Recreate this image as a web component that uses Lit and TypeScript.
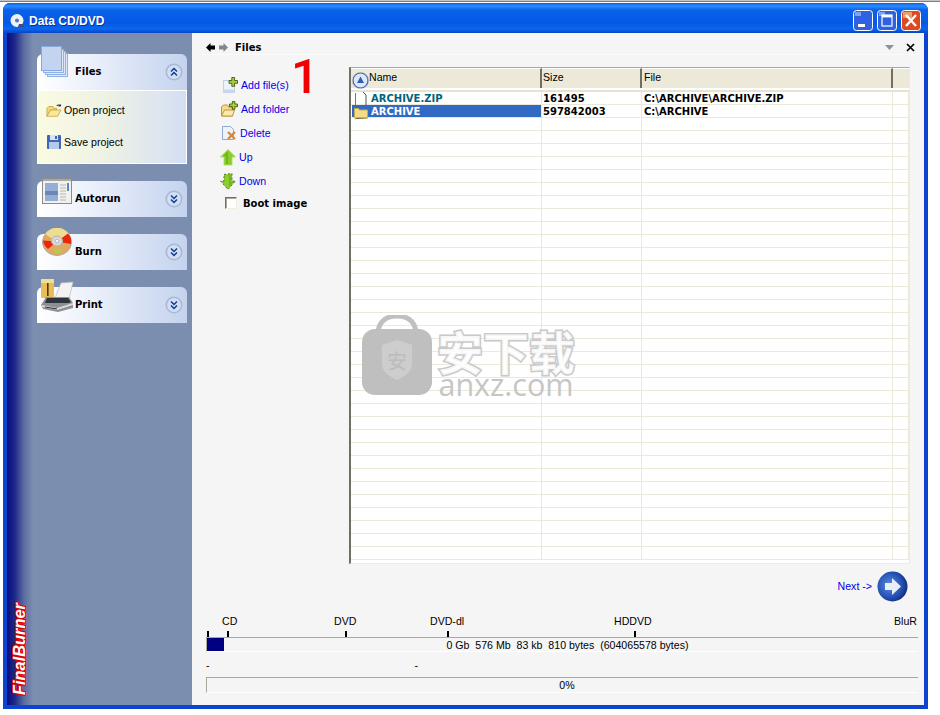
import { LitElement, html, svg, css } from 'lit';
import { customElement } from 'lit/decorators.js';

const chevrons = (up: boolean) => svg`
  <svg class="chev" width="18" height="18" viewBox="0 0 18 18">
    <circle cx="9" cy="9" r="7.7" fill="#d3def3" stroke="#a9b8d6" stroke-width="1.6"/>
    <path d=${up ? 'M6 8.5l3-3 3 3M6 12.5l3-3 3 3' : 'M6 5.5l3 3 3-3M6 9.5l3 3 3-3'} fill="none" stroke="#0b3f94" stroke-width="1.5"/>
  </svg>`;

const stackIcon = svg`
  <svg class="art" style="left:4px;top:-8px" width="28" height="32" viewBox="0 0 28 32">
    <g fill="#dfe8f8" stroke="#8fb2e6">
      <rect x="6.5" y="7.5" width="20" height="23"/>
      <rect x="4.5" y="5.5" width="20" height="23"/>
      <rect x="2.5" y="3.5" width="20" height="23"/>
    </g>
    <rect x=".5" y=".5" width="20" height="24" fill="#c3d4f1" stroke="#86a9e0"/>
  </svg>`;

const windowIcon = svg`
  <svg class="art" style="left:5px;top:-3px" width="31" height="27" viewBox="0 0 31 27">
    <rect x=".5" y=".5" width="29" height="25" fill="#f1f1ee" stroke="#8c8c8c"/>
    <rect x="1" y="1" width="28" height="2" fill="#a9a9a9"/>
    <rect x="3" y="5" width="13" height="18" fill="#93afd8"/>
    <rect x="3" y="13" width="13" height="4" fill="#6b88b4"/>
    <path d="M18 7h6M18 10h6M18 13h6M18 16h6M18 19h6M18 22h6" stroke="#b4b4b4"/>
    <rect x="25" y="5" width="2" height="8" fill="#5f86c5"/>
  </svg>`;

const discIcon = svg`
  <svg class="art" style="left:5px;top:-6px" width="30" height="28" viewBox="0 0 30 28">
    <ellipse cx="15" cy="14" rx="14.500" ry="13.500" fill="#e2a860" stroke="#a8a8a8"/>
    <path d="M3 6a14 13 0 0 1 24 0l-12 8z" fill="#efdc8e"/>
    <path d="M1 12.500l14 1-9 7.500a14 13 0 0 1-5-8.500z" fill="#e8280c"/>
    <path d="M29 11l-14 2.500 11-8a14 13 0 0 1 3 5.500z" fill="#e8280c"/>
    <path d="M29 10v6l-14-2.500z" fill="#e8280c"/>
    <ellipse cx="16" cy="23" rx="4" ry="2.200" fill="#b9c94a"/>
    <ellipse cx="15" cy="13" rx="5.500" ry="5" fill="#d8d8d8" stroke="#b4b4b4"/>
    <circle cx="15" cy="13" r="1.800" fill="#f4f4f4" stroke="#a0a0a0" stroke-width=".6"/>
  </svg>`;

const printerIcon = svg`
  <svg class="art" style="left:4px;top:-8px" width="33" height="33" viewBox="0 0 33 33">
    <rect x="0" y="0" width="13" height="19" rx="1" fill="#e8bc58"/>
    <rect x="0" y="0" width="13" height="4" fill="#f6dd8e"/>
    <path d="M6 4h1.600v13H6z" fill="#4b3a14"/>
    <path d="M14 19l6-15 12-1-4 17z" fill="#f3f3f3" stroke="#bcbcbc" stroke-width=".7"/>
    <path d="M0 26l5-8h23l4 6v5L17 33 2 30z" fill="#8d8f94"/>
    <path d="M6 19h21l3 4-2 1H4z" fill="#2f333c"/>
    <path d="M1 26l15 3 16-5v2L16 31 1 28z" fill="#d9dadd"/>
    <path d="M4 28l12 2" stroke="#1f2430" stroke-width="1"/>
  </svg>`;

const openIcon = svg`
  <svg width="16" height="15" viewBox="0 0 18 17">
    <path d="M12 3a4 3 0 0 1 5 0" fill="none" stroke="#222" stroke-width="1.200"/>
    <path d="M16.500 1v3h-2.600z" fill="#222"/>
    <path d="M1 15V6l2-2h5l1 2h3v2H5z" fill="#f4d87a" stroke="#c9a84a"/>
    <path d="M1 15l4-7h12l-4 7z" fill="#fbe89a" stroke="#c9a84a"/>
  </svg>`;

const floppyIcon = svg`
  <svg width="16" height="16" viewBox="0 0 16 16">
    <rect x="1" y="1" width="14" height="14" rx="1" fill="#3f67b6"/>
    <rect x="4" y="1" width="8" height="5" fill="#dbe3f2"/>
    <rect x="9" y="2" width="2" height="3" fill="#3f67b6"/>
    <rect x="3" y="8" width="10" height="7" fill="#b5c9ea"/>
  </svg>`;

const addFileIcon = svg`
  <svg width="16" height="16" viewBox="0 0 16 16">
    <path d="M1.500 3.500h11v12h-11z" fill="#eef3fb" stroke="#c0d0e6"/>
    <path d="M1.500 12.500h11v3h-11z" fill="#c8d8ee"/>
    <path d="M7 3.500h2.800V.5h2.800v3h2.900v2.800h-2.900v3H9.800v-3H7z" fill="#a8d030" stroke="#2f4a10" stroke-width=".8"/>
  </svg>`;

const addFolderIcon = svg`
  <svg width="17" height="16" viewBox="0 0 17 16">
    <path d="M.5 15V6l2-2h4l1 2h4v9z" fill="#f6dc86" stroke="#b8994a"/>
    <path d="M.5 15l3-6h10l-2 6z" fill="#fbe9a8" stroke="#b8994a"/>
    <path d="M8.500 3h2.800V.5h2.600V3h2.600v2.700h-2.600v2.600h-2.600V5.700H8.500z" fill="#a8d030" stroke="#2f4a10" stroke-width=".8"/>
  </svg>`;

const deleteIcon = svg`
  <svg width="16" height="16" viewBox="0 0 16 16">
    <path d="M1.500 1.500h8l3 3v10h-11z" fill="#eef3fb" stroke="#8fa8cc"/>
    <path d="M7 7l7 7M14 7l-7 7" stroke="#d88a3a" stroke-width="2.400"/>
  </svg>`;

const upIcon = svg`
  <svg width="16" height="17" viewBox="0 0 16 17">
    <path d="M8 .5L15.500 8H12v8H4V8H.5z" fill="#8ccc2c" stroke="#a8dc50" stroke-width=".8"/>
    <path d="M8 2L3 7h3v8h2z" fill="#6cb81e"/>
  </svg>`;

const downIcon = svg`
  <svg width="16" height="17" viewBox="0 0 16 17">
    <path d="M4 1.500l8-1V8h3.500L8 16.500.5 8H4z" fill="#8ccc2c" stroke="#39531a" stroke-width=".8" stroke-dasharray="2 2"/>
    <path d="M9 2h2v7h2l-4 5z" fill="#6cb81e"/>
  </svg>`;

const fileIcon = svg`
  <svg width="14" height="13" viewBox="0 0 14 13">
    <path d="M1.500 1v12" stroke="#777"/>
    <path d="M9 0l3 3v10" fill="none" stroke="#555"/>
  </svg>`;

const folderIcon = svg`
  <svg class="over" width="14" height="14" viewBox="0 0 14 14">
    <path d="M.5 12V2.500h4l1 1.500h8v8z" fill="#f6dc86" stroke="#c8a94e"/>
    <path d="M1 13l2-1h10" stroke="#a8a04a"/>
  </svg>`;

const sortIcon = svg`
  <svg class="sort" width="17" height="17" viewBox="0 0 17 17">
    <circle cx="8.500" cy="8.500" r="7.500" fill="#dfe7f7" stroke="#2f5fb4" stroke-width="1.200"/>
    <circle cx="8.500" cy="8.500" r="8.200" fill="none" stroke="#b9b9b9" stroke-width=".6"/>
    <path d="M8.500 4.500l3.500 6.500H5z" fill="#2f5fb4"/>
  </svg>`;

const rows = [
  { name: 'ARCHIVE.ZIP', size: '161495', file: 'C:\\ARCHIVE\\ARCHIVE.ZIP', folder: false },
  { name: 'ARCHIVE', size: '597842003', file: 'C:\\ARCHIVE', folder: true },
];

// capacity marks, x relative to the bar
const ticks = [1, 21, 139, 241, 428];
const labels = [
  { text: 'CD', x: 16 },
  { text: 'DVD', x: 128 },
  { text: 'DVD-dl', x: 224 },
  { text: 'HDDVD', x: 408 },
  { text: 'BluR', x: 688 },
];

@customElement('app-root')
export class AppRoot extends LitElement {
  static styles = css`
    :host {
      display: block;
      height: 715px;
      background: #fff;
      font-family: 'Liberation Sans', Arial, sans-serif;
      font-size: 10.6px;
      color: #000;
      overflow: hidden;
    }
    .topline {
      height: 2px;
      background: linear-gradient(#c4c4c4 0 1px, #7f7f7f 1px);
    }
    .window {
      display: flex;
      flex-direction: column;
      width: 925px;
      height: 706px;
      margin: 1px 0 0 3px;
      border-radius: 7px 7px 0 0;
      background: #0a44cf;
      overflow: hidden;
    }
    .titlebar {
      display: flex;
      align-items: center;
      flex: none;
      height: 30px;
      padding: 5px 7px 0 7px;
      box-sizing: border-box;
      background: linear-gradient(#0a5fe8 0, #2f8bfb 3px, #0a62ea 7px, #0459e4 20px, #0a66ee 26px, #0745c8 30px);
      color: #fff;
      font-size: 12px;
      font-weight: bold;
      text-shadow: 1px 1px 0 #0a2f9a;
    }
    .titlebar .app-icon { margin-right: 4px; }
    .caption-btns { display: flex; gap: 4px; margin-left: auto; }
    .cap {
      display: block;
      width: 20px;
      height: 21px;
      box-sizing: border-box;
    }
    .client {
      display: flex;
      flex: 1;
      min-height: 0;
      margin: 0 4px 4px 4px;
    }
    .sidebar {
      display: flex;
      flex-direction: column;
      flex: none;
      width: 185px;
      padding-top: 21px;
      background: linear-gradient(90deg, #0a0a80 0, #1f2a8c 8px, #5c6d9f 17px, #7b8eb0 26px, #7b8eb0 100%);
    }
    .panel { width: 150px; margin: 0 0 17px 30px; }
    .panel-head {
      position: relative;
      display: flex;
      align-items: center;
      justify-content: space-between;
      height: 36px;
      padding: 0 4px 1px 38px;
      border-radius: 6px 6px 0 0;
      background: linear-gradient(90deg, #fff 0, #e6ecf9 45%, #c4d3ee 100%);
      font-family: 'DejaVu Sans', Verdana, sans-serif;
      font-size: 10px;
      font-weight: bold;
      box-sizing: border-box;
    }
    .art { position: absolute; }
    .chev { display: block; margin-top: 1px; }
    .panel-body {
      display: flex;
      flex-direction: column;
      gap: 12px;
      box-sizing: border-box;
      height: 74px;
      padding: 9px 0 0 8px;
      border: 1px solid #fff;
      background: linear-gradient(90deg, #fbfbe2 0, #eef2e4 45%, #d5dff4 100%);
    }
    .task { display: flex; align-items: center; gap: 2px; height: 20px; }
    .brand {
      align-self: flex-start;
      margin: auto 0 10px 4px;
      writing-mode: vertical-rl;
      transform: rotate(180deg);
      color: #fff;
      font-size: 16.4px;
      font-weight: bold;
      font-style: italic;
      line-height: 17px;
      text-shadow: 1px 0 #e00000, -1px 0 #e00000, 0 1px #e00000, 0 -1px #e00000, 1px 1px #e00000, -1px -1px #e00000, 1px -1px #e00000, -1px 1px #e00000;
    }
    .main {
      display: flex;
      flex-direction: column;
      flex: 1;
      min-width: 0;
      background: #f5f5f5;
    }
    .crumb {
      display: flex;
      align-items: center;
      gap: 4px;
      flex: none;
      height: 22px;
      margin: 0 7px 0 6px;
      padding: 7px 2px 0 8px;
      box-sizing: border-box;
      border-bottom: 1px solid #fbfbfb;
      font-family: 'DejaVu Sans', Verdana, sans-serif;
      font-size: 10px;
      font-weight: bold;
    }
    .crumb .title { margin-left: 3px; }
    .crumb .drop { margin-left: auto; margin-right: 8px; }
    .work { display: flex; flex: none; position: relative; }
    .actions {
      flex: none;
      width: 157px;
      padding: 18px 0 0 28px;
      box-sizing: border-box;
    }
    .action {
      display: flex;
      align-items: center;
      height: 24px;
      color: #0000e8;
    }
    .action .ic { display: flex; justify-content: center; width: 18px; margin-right: 3px; }
    .action .ic.file { justify-content: flex-end; }
    .action .ic.del { margin-right: 2px; }
    .action .ic.move { justify-content: flex-start; margin-right: 1px; }
    .check {
      display: flex;
      align-items: center;
      height: 20px;
      padding-left: 5px;
      font-family: 'DejaVu Sans', Verdana, sans-serif;
      font-size: 10px;
      font-weight: bold;
    }
    .box {
      width: 12px;
      height: 12px;
      margin-right: 6px;
      box-sizing: border-box;
      border: 1px solid;
      border-color: #716f64 #f1efe2 #f1efe2 #716f64;
      background: #fff;
      box-shadow: inset 1px 1px 0 #aca899;
    }
    .annot {
      position: absolute;
      left: 99px;
      top: -3px;
      color: #f00000;
      font-family: Roboto, sans-serif;
      font-size: 49px;
      font-weight: 500;
      line-height: 49px;
    }
    .table {
      position: relative;
      flex: none;
      width: 561px;
      height: 497px;
      margin-top: 12px;
      box-sizing: border-box;
      border-left: 2px solid #716f64;
      border-top: 1px solid #aca899;
      border-right: 1px solid #eeecdf;
      border-bottom: 1px solid #eeecdf;
      background: #fff;
      overflow: hidden;
    }
    .row {
      display: grid;
      grid-template-columns: 191px 100px 251px 1fr;
    }
    .head {
      height: 20px;
      background: #ece9d8;
      border-bottom: 2px solid #fff;
      box-shadow: 0 2px 0 #e6e3d2;
      margin-bottom: 2px;
    }
    .head > div {
      display: flex;
      align-items: center;
      padding: 0 0 3px 2px;
      box-sizing: border-box;
      border-top: 1px solid #fff;
      border-right: 2px solid #716f64;
    }
    .head > div:first-child { padding-left: 18px; position: relative; }
    .head > div:nth-child(2) { padding-left: 1px; }
    .head > div:last-child { border-right: 0; }
    .sort { position: absolute; left: 1px; top: 3px; }
    .cell-row { height: 13px; box-sizing: border-box; border-bottom: 1px solid #ece9d8; }
    .cell-row > div {
      display: flex;
      align-items: center;
      box-sizing: border-box;
      padding-left: 2px;
      border-right: 1px solid #ece9d8;
      font-family: 'DejaVu Sans', Verdana, sans-serif;
      font-size: 10px;
      font-weight: bold;
      white-space: nowrap;
    }
    .cell-row > div:nth-child(2) { padding-left: 1px; }
    .name { position: relative; color: #006478; padding-left: 20px !important; }
    .name svg { position: absolute; left: 3px; top: 0; }
    .name svg.over { top: 1px; }
    .name.sel { background: #316ac5; color: #fff; margin-left: 1px; padding-left: 19px !important; }
    .name.sel svg { left: 2px; }
    .watermark {
      position: absolute;
      left: 11px;
      top: 247px;
      display: flex;
      gap: 5px;
      pointer-events: none;
    }
    .wm-text { display: flex; flex-direction: column; align-items: center; margin-top: 12px; }
    .wm-cn {
      font-family: 'Noto Sans CJK SC', sans-serif;
      font-size: 46px;
      font-weight: 700;
      line-height: 46px;
      color: rgba(255, 255, 255, 0.85);
      -webkit-text-stroke: 3px #c9c9c9;
      paint-order: stroke fill;
    }
    .wm-en {
      font-family: 'Open Sans', sans-serif;
      font-size: 30.5px;
      line-height: 22px;
      color: #c6c6c6;
    }
    .next {
      display: flex;
      align-items: center;
      justify-content: flex-end;
      gap: 5px;
      flex: none;
      height: 38px;
      padding: 6px 16px 0 0;
      box-sizing: border-box;
      color: #0000e8;
    }
    .gauge { flex: none; margin: 13px 6px 0 14px; }
    .scale { position: relative; height: 22px; }
    .scale span { position: absolute; top: 0; line-height: 13px; }
    .scale i { position: absolute; bottom: 0; width: 2px; height: 6px; background: #000; }
    .bar {
      position: relative;
      display: flex;
      align-items: center;
      justify-content: center;
      height: 15px;
      box-sizing: border-box;
      padding-left: 10px;
      border-top: 1px solid #aca899;
      border-left: 1px solid #aca899;
      border-bottom: 1px solid #fff;
      white-space: pre;
    }
    .fill { position: absolute; left: 0; top: 0; bottom: 0; background: #000080; }
    .dashes { display: flex; height: 25px; align-items: center; gap: 205px; }
    .bar.progress { height: 16px; padding-bottom: 1px; padding-left: 9px; }
  `;

  render() {
    return html`
      <div class="topline"></div>
      <div class="window">
        <div class="titlebar">
          <svg class="app-icon" width="15" height="15" viewBox="0 0 15 15">
            <circle cx="7" cy="7.500" r="6.500" fill="#eef2f8"/>
            <circle cx="7" cy="7.500" r="2" fill="#5a78b8"/>
            <path d="M9 11h5v3H8z" fill="#3a4f88"/>
          </svg>
          Data CD/DVD
          <div class="caption-btns">
            <svg class="cap" viewBox="0 0 20 21">
              <rect x=".5" y=".5" width="19" height="20" rx="3" fill="#2f62e0" stroke="#fff"/>
              <rect x="2" y="2" width="6" height="4" fill="#7da3f2"/>
              <rect x="5" y="14" width="7" height="3" fill="#fff"/>
            </svg>
            <svg class="cap" viewBox="0 0 20 21">
              <rect x=".5" y=".5" width="19" height="20" rx="3" fill="#2f62e0" stroke="#fff"/>
              <rect x="2" y="2" width="6" height="4" fill="#7da3f2"/>
              <rect x="5" y="5" width="10" height="11" fill="none" stroke="#fff" stroke-width="1.200"/>
              <rect x="5" y="5" width="10" height="2.400" fill="#fff"/>
            </svg>
            <svg class="cap" viewBox="0 0 20 21">
              <rect x=".5" y=".5" width="19" height="20" rx="3" fill="#dc4a24" stroke="#fff"/>
              <rect x="2" y="2" width="9" height="6" fill="#e6a06a"/>
              <path d="M5 5l10 11M15 5L5 16" stroke="#fff" stroke-width="2.400"/>
            </svg>
          </div>
        </div>
        <div class="client">
          <div class="sidebar">
            <div class="panel">
              <div class="panel-head">${stackIcon}Files${chevrons(true)}</div>
              <div class="panel-body">
                <div class="task">${openIcon}Open project</div>
                <div class="task">${floppyIcon}Save project</div>
              </div>
            </div>
            <div class="panel"><div class="panel-head">${windowIcon}Autorun${chevrons(false)}</div></div>
            <div class="panel"><div class="panel-head">${discIcon}Burn${chevrons(false)}</div></div>
            <div class="panel"><div class="panel-head">${printerIcon}Print${chevrons(false)}</div></div>
            <div class="brand">FinalBurner</div>
          </div>
          <div class="main">
            <div class="crumb">
              <svg width="9" height="9" viewBox="0 0 9 9"><path d="M0 4.500L4.500 0v2.500H9v4H4.500V9z"/></svg>
              <svg width="9" height="9" viewBox="0 0 9 9"><path d="M9 4.500L4.500 0v2.500H0v4h4.500V9z" fill="#7f8790"/></svg>
              <span class="title">Files</span>
              <svg class="drop" width="9" height="5" viewBox="0 0 9 5"><path d="M0 0h9L4.500 5z" fill="#8a93a4"/></svg>
              <svg width="9" height="9" viewBox="0 0 9 9"><path d="M1 1l7 7M8 1L1 8" stroke="#000" stroke-width="1.700"/></svg>
            </div>
            <div class="work">
              <div class="actions">
                <div class="action"><span class="ic file">${addFileIcon}</span>Add file(s)</div>
                <div class="action"><span class="ic">${addFolderIcon}</span>Add folder</div>
                <div class="action"><span class="ic del">${deleteIcon}</span>Delete</div>
                <div class="action"><span class="ic move">${upIcon}</span>Up</div>
                <div class="action"><span class="ic move">${downIcon}</span>Down</div>
                <div class="check"><span class="box"></span>Boot image</div>
              </div>
              <div class="annot">1</div>
              <div class="table">
                <div class="row head">
                  <div>${sortIcon}Name</div><div>Size</div><div>File</div><div></div>
                </div>
                ${Array.from({ length: 36 }, (_, i) => {
                  const r = rows[i];
                  return html`
                    <div class="row cell-row">
                      <div class="name ${r?.folder ? 'sel' : ''}">
                        ${r ? (r.folder ? folderIcon : fileIcon) : ''}${r?.name ?? ''}
                      </div>
                      <div>${r?.size ?? ''}</div>
                      <div>${r?.file ?? ''}</div>
                      <div></div>
                    </div>`;
                })}
                <div class="watermark">
                  <svg width="70" height="80" viewBox="0 0 70 80">
                    <path d="M16 16C18 5 26 1 35 1s17 4 19 15" fill="none" stroke="#c0c0c0" stroke-width="5"/>
                    <rect x="0" y="14" width="70" height="66" rx="13" fill="#bfbfbf"/>
                    <path d="M20 30l15-5 15 5v19c0 8-8 13-15 16-7-3-15-8-15-16z" fill="#cdcdcd"/>
                    <text x="35" y="54" text-anchor="middle" font-family="'Noto Sans CJK SC', sans-serif" font-size="20" fill="#bcbcbc">安</text>
                  </svg>
                  <div class="wm-text">
                    <div class="wm-cn">安下载</div>
                    <div class="wm-en">anxz.com</div>
                  </div>
                </div>
              </div>
            </div>
            <div class="next">
              Next -&gt;
              <svg width="31" height="31" viewBox="0 0 31 31">
                <defs>
                  <radialGradient id="ball" cx="40%" cy="45%" r="60%">
                    <stop offset="0" stop-color="#5f8ce0"/>
                    <stop offset=".7" stop-color="#2450b4"/>
                    <stop offset="1" stop-color="#12307e"/>
                  </radialGradient>
                </defs>
                <circle cx="15.500" cy="15.500" r="15" fill="url(#ball)"/>
                <path d="M8 12h7V7l9 8.500-9 8.500v-5H8z" fill="#e8eefa"/>
              </svg>
            </div>
            <div class="gauge">
              <div class="scale">
                ${labels.map((l) => html`<span style="left:${l.x}px">${l.text}</span>`)}
                ${ticks.map((t) => html`<i style="left:${t}px"></i>`)}
              </div>
              <div class="bar"><div class="fill" style="width:17px"></div>0 Gb  576 Mb  83 kb  810 bytes  (604065578 bytes)</div>
              <div class="dashes"><span>-</span><span>-</span></div>
              <div class="bar progress">0%</div>
            </div>
          </div>
        </div>
      </div>
    `;
  }
}
